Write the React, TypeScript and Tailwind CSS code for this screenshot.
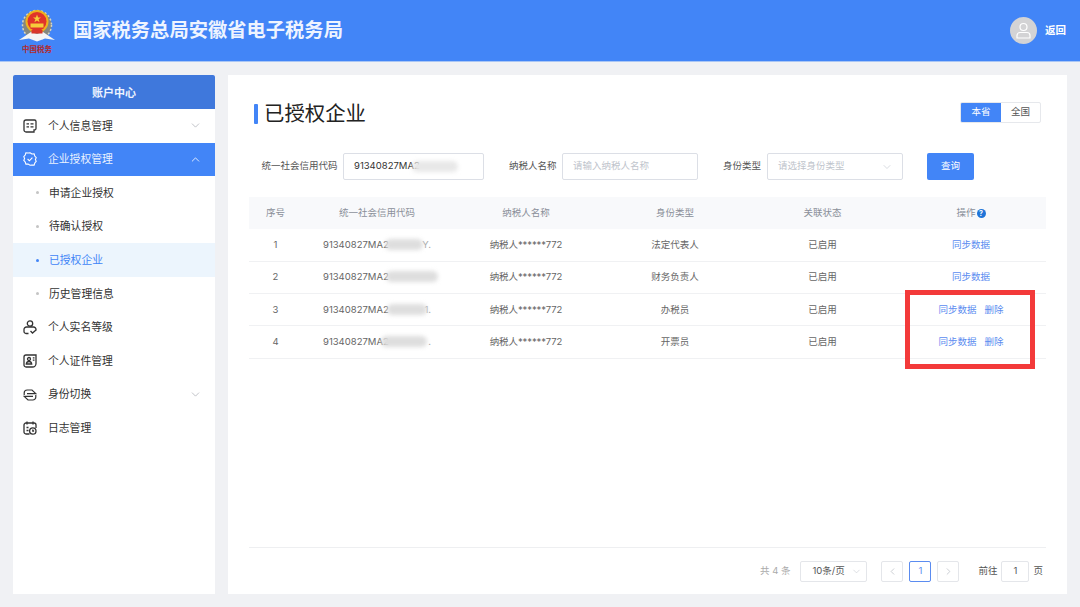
import { ChevronDown, ChevronLeft, ChevronRight, ChevronUp } from 'lucide-react';
import type { ReactNode } from 'react';

const cjk = "font-['Inter','Noto_Sans_CJK_SC',sans-serif]";

const IconInfo = () => (
  <svg width="14" height="14" viewBox="0 0 14 14" fill="none" stroke="#333" strokeWidth="1.3">
    <path d="M3 1h8.500A1.500 1.500 0 0 1 13 2.500v7a1.500 1.500 0 0 1-1.500 1.500H11v2H3a2 2 0 0 1-2-2V3a2 2 0 0 1 2-2z" />
    <path d="M3.500 4.800h2.500M7.500 4.800h3M3.500 7.800h2.500M7.500 7.800h3" />
  </svg>
);

const IconBadge = () => (
  <svg width="14" height="14" viewBox="0 0 14 14" fill="none" stroke="#fff" strokeWidth="1.1">
    <path d="M7 .8l1.900 1.200 2.200-.1.700 2.100 1.400 1.700-.8 1.800.8 1.900-1.400 1.600-.7 2.100-2.200-.1L7 13.200l-1.900-1.200-2.200.1-.7-2.100L.8 8.400l.8-1.900-.8-1.800 1.400-1.700.7-2.100 2.200.1z" />
    <path d="M4.600 7l1.800 1.800 3-3.200" />
  </svg>
);

const IconUser = () => (
  <svg width="14" height="15" viewBox="0 0 14 15" fill="none" stroke="#333" strokeWidth="1.3">
    <circle cx="7" cy="3.500" r="2.700" />
    <path d="M5.500 13.500H3a2 2 0 0 1-2-2V9.500a2.500 2.500 0 0 1 2.500-2.500h7A2.500 2.500 0 0 1 13 9.500v1" />
    <path d="M7.500 11l2 2 3.500-3" />
  </svg>
);

const IconCard = () => (
  <svg width="14" height="14" viewBox="0 0 14 14" fill="none" stroke="#333" strokeWidth="1.3">
    <path d="M3 1h10v8.500A3.500 3.500 0 0 1 9.500 13H3a2 2 0 0 1-2-2V3a2 2 0 0 1 2-2z" />
    <circle cx="6" cy="5" r="1.500" />
    <path d="M3.300 10c.2-1.600 1.300-2.500 2.700-2.500s2.500.9 2.700 2.500zM9.800 3.800h1.700M9.800 6.200h1.700" />
  </svg>
);

const IconSwitch = () => (
  <svg width="14" height="14" viewBox="0 0 14 14" fill="none" stroke="#333" strokeWidth="1.2">
    <path d="M1.200 7V5a3 3 0 0 1 3-3H9l3.800 3.600H4" />
    <path d="M12.800 7v2a3 3 0 0 1-3 3H5L1.200 8.400H10" />
  </svg>
);

const IconLog = () => (
  <svg width="14" height="14" viewBox="0 0 14 14" fill="none" stroke="#333" strokeWidth="1.3">
    <path d="M6.500 13H3a2 2 0 0 1-2-2V4a2 2 0 0 1 2-2h8a2 2 0 0 1 2 2v3" />
    <path d="M4 .500V3.500M10 .500V3.500M3.500 6.500h2M3.500 9.500h2" />
    <circle cx="9.800" cy="10" r="3.200" />
    <path d="M9.800 8.500V10h1.300" />
  </svg>
);

function Emblem() {
  return (
    <div className="flex w-[36px] flex-col items-center">
      <svg width="36" height="33" viewBox="0 0 36 33">
        <circle cx="18" cy="16" r="14.500" fill="#85877f" />
        <circle cx="18" cy="16" r="14.500" fill="none" stroke="#d8d6c0" strokeWidth="1.500" strokeDasharray="2 2" />
        <circle cx="18" cy="12.500" r="11.500" fill="#eeb21d" />
        <circle cx="18" cy="12.500" r="9.500" fill="#e0342a" />
        <path d="M18 5.500l1.100 3h2.900l-2.400 1.800 1 2.900-2.600-1.800-2.600 1.800 1-2.900-2.400-1.800h2.900z" fill="#f6cd3a" />
        <rect x="11.500" y="14.500" width="13" height="4" fill="#f6cd3a" />
        <path d="M0 31l12-8 6 2 6-2 12 8-10-1.500-8 3-8-3z" fill="#f4f4f4" />
        <path d="M12.500 21h11v3.500h-11z" fill="#d9362c" />
      </svg>
      <span className="mt-[2px] whitespace-nowrap font-['Noto_Sans_CJK_SC',serif] text-[7.500px] font-bold leading-[9px] text-[#b5292a]">
        中国税务
      </span>
    </div>
  );
}

function NavRow({ icon, label, arrow }: { icon: ReactNode; label: string; arrow?: boolean }) {
  return (
    <div className="flex h-[33.6px] items-center pl-[10px] pr-[13px] text-[#333]">
      <span className="flex w-[25px] shrink-0">{icon}</span>
      <span className="flex-1 pt-[2px] text-[10.800px]">{label}</span>
      {arrow && <ChevronDown size={13} strokeWidth={1.300} className="text-[#a8abb2]" />}
    </div>
  );
}

function SubRow({ label, active }: { label: string; active?: boolean }) {
  return (
    <div
      className={`flex h-[33.6px] items-center pl-[23px] text-[10.800px] ${
        active ? 'bg-[#ecf5fd] text-[#4285f7]' : 'text-[#333]'
      }`}
    >
      <span className={`mr-[10px] h-[3px] w-[3px] rounded-full ${active ? 'bg-[#4285f7]' : 'bg-[#c4c4c4]'}`} />
      <span className="pt-[2px]">{label}</span>
    </div>
  );
}

const rows = [
  { no: 1, role: '法定代表人', tail: 'Y.', smudge: 'left-[62px] w-[38px]', del: false },
  { no: 2, role: '财务负责人', tail: '', smudge: 'left-[63px] w-[52px]', del: false },
  { no: 3, role: '办税员', tail: '1.', smudge: 'left-[64px] w-[40px]', del: true },
  { no: 4, role: '开票员', tail: '.', smudge: 'left-[58px] w-[46px]', del: true },
];

export default function App() {
  return (
    <div className={`relative flex h-[607px] w-[1080px] flex-col overflow-hidden bg-[#f0f1f4] ${cjk}`}>
      <header className="flex h-[62px] shrink-0 items-center border-b border-[#a9c6f5] bg-[#4285f7] pl-[19px] pr-[14px]">
        <Emblem />
        <h1 className="ml-[18px] flex-1 text-[19.300px] font-bold text-[#eef4ff]">国家税务总局安徽省电子税务局</h1>
        <div className="flex h-[27px] w-[27px] items-center justify-center rounded-full bg-[#d3d3d5]">
          <svg width="17" height="17" viewBox="0 0 17 17" fill="none" stroke="#fff" strokeWidth="1.200">
            <circle cx="8.500" cy="5" r="3.500" />
            <path d="M2 16v-2.500a3 3 0 0 1 3-3h7a3 3 0 0 1 3 3V16z" />
          </svg>
        </div>
        <span className="ml-[8px] text-[10.500px] font-bold text-white">返回</span>
      </header>

      <div className="flex flex-1 gap-[13px] px-[13px] pb-[13px] pt-[13px]">
        <aside className="w-[202px] shrink-0 bg-white">
          <div className="flex h-[34px] items-center justify-center rounded-t-[2px] bg-[#3f78dc] pt-[2px] text-[11px] font-bold text-[#eef4ff]">
            账户中心
          </div>
          <NavRow icon={<IconInfo />} label="个人信息管理" arrow />
          <div className="flex h-[33.6px] items-center bg-[#4285f7] pl-[10px] pr-[13px] text-[#eaf2ff]">
            <span className="flex w-[25px] shrink-0">
              <IconBadge />
            </span>
            <span className="flex-1 pt-[2px] text-[10.800px]">企业授权管理</span>
            <ChevronUp size={13} strokeWidth={1.500} className="text-white" />
          </div>
          <SubRow label="申请企业授权" />
          <SubRow label="待确认授权" />
          <SubRow label="已授权企业" active />
          <SubRow label="历史管理信息" />
          <NavRow icon={<IconUser />} label="个人实名等级" />
          <NavRow icon={<IconCard />} label="个人证件管理" />
          <NavRow icon={<IconSwitch />} label="身份切换" arrow />
          <NavRow icon={<IconLog />} label="日志管理" />
        </aside>

        <main className="flex w-[839px] flex-col bg-white pl-[21px] pr-[21px]">
          <div className="mt-[26px] flex h-[26px] items-center">
            <span className="ml-[5px] h-[20px] w-[4px] rounded-[1px] bg-[#4285f7]" />
            <h2 className="ml-[6px] flex-1 text-[20.400px] leading-[26px] text-[#222]">已授权企业</h2>
            <div className="mr-[5px] flex h-[21px] w-[81px] -translate-y-[2px] overflow-hidden rounded-[2px] border border-[#e6e8ec] text-[9.500px]">
              <span className="flex w-[40px] items-center justify-center bg-[#4285f7] text-white">本省</span>
              <span className="flex flex-1 items-center justify-center text-[#555]">全国</span>
            </div>
          </div>

          <div className="mt-[26px] flex h-[27px] items-center text-[9.500px] text-[#555]">
            <span className="ml-[12.500px] w-[81.500px]">统一社会信用代码</span>
            <div className="relative flex h-[27px] w-[141px] items-center rounded-[2px] border border-[#dcdfe6] pl-[10px] text-[#333]">
              <span className="text-[9.500px]">91340827MA2</span>
              <span className="absolute left-[68px] top-[7px] h-[11px] w-[46px] rounded-full bg-[#e8e8e8] blur-[2px]" />
            </div>
            <span className="ml-[25px] w-[53px]">纳税人名称</span>
            <div className="flex h-[27px] w-[136px] items-center rounded-[2px] border border-[#dcdfe6] pl-[10px] text-[#c0c4cc]">
              请输入纳税人名称
            </div>
            <span className="ml-[25px] w-[44px]">身份类型</span>
            <div className="flex h-[27px] w-[136px] items-center justify-between rounded-[2px] border border-[#dcdfe6] pl-[10px] pr-[9px] text-[#c0c4cc]">
              请选择身份类型
              <ChevronDown size={12} strokeWidth={1.200} className="text-[#c0c4cc]" />
            </div>
            <button className="ml-[24px] flex h-[27px] w-[47px] items-center justify-center rounded-[2px] bg-[#4285f7] text-white">
              查询
            </button>
          </div>

          <table className="mt-[17px] w-[797px] table-fixed border-collapse text-[9.500px]">
            <colgroup>
              <col className="w-[53px]" />
              <col className="w-[150px]" />
              <col className="w-[148px]" />
              <col className="w-[150px]" />
              <col className="w-[145px]" />
              <col className="w-[151px]" />
            </colgroup>
            <thead>
              <tr className="h-[32px] bg-[#f8f9fb] text-[#8a8f99]">
                <th className="font-normal">序号</th>
                <th className="font-normal">统一社会信用代码</th>
                <th className="font-normal">纳税人名称</th>
                <th className="font-normal">身份类型</th>
                <th className="font-normal">关联状态</th>
                <th className="pl-[1px] font-normal">
                  <span className="inline-flex items-center gap-[1px]">
                    操作
                    <span className="flex h-[9px] w-[9px] items-center justify-center rounded-full bg-[#1f75d8] text-[7px] font-bold leading-none text-white">
                      ?
                    </span>
                  </span>
                </th>
              </tr>
            </thead>
            <tbody className="text-[#666]">
              {rows.map((row) => (
                <tr key={row.no} className="h-[32.300px] border-b border-[#f0f1f3] text-center">
                  <td>{row.no}</td>
                  <td>
                    <span className="relative flex w-[108px] translate-x-[21px] justify-between text-left">
                      <span>91340827MA2</span>
                      <span className="text-[#aaa]">{row.tail}</span>
                      <span className={`absolute top-[1px] h-[11px] rounded-full bg-[#dedede] blur-[2px] ${row.smudge}`} />
                    </span>
                  </td>
                  <td className="tracking-[-0.1px]">纳税人******772</td>
                  <td>{row.role}</td>
                  <td>已启用</td>
                  <td className="pl-[1px] text-[#5b8cf0]">
                    同步数据
                    {row.del && <span className="ml-[8px]">删除</span>}
                  </td>
                </tr>
              ))}
            </tbody>
          </table>

          <div className="mt-auto flex h-[47px] items-center justify-end border-t border-[#eeeff1] text-[9.500px] text-[#555]">
            <span className="text-[#aaa]">共 4 条</span>
            <div className="ml-[10px] flex h-[21px] w-[67px] items-center justify-between rounded-[2px] border border-[#e4e6ea] pl-[11px] pr-[4px]">
              10条/页
              <ChevronDown size={11} strokeWidth={1.200} className="text-[#c0c4cc]" />
            </div>
            <span className="ml-[14px] flex h-[21px] w-[22px] items-center justify-center rounded-[2px] border border-[#e4e6ea] text-[#b5b9c0]">
              <ChevronLeft size={11} strokeWidth={1.500} />
            </span>
            <span className="ml-[6px] flex h-[21px] w-[22px] items-center justify-center rounded-[2px] border border-[#5b8cf0] text-[#5b8cf0]">
              1
            </span>
            <span className="ml-[6px] flex h-[21px] w-[22px] items-center justify-center rounded-[2px] border border-[#e4e6ea] text-[#b5b9c0]">
              <ChevronRight size={11} strokeWidth={1.500} />
            </span>
            <span className="ml-[19px]">前往</span>
            <span className="ml-[4px] flex h-[21px] w-[28px] items-center justify-center rounded-[2px] border border-[#e4e6ea]">
              1
            </span>
            <span className="ml-[4px] mr-[3px]">页</span>
          </div>
        </main>
      </div>

      {/* red marker drawn over the screenshot */}
      <div className="absolute left-[905px] top-[290px] h-[79px] w-[130px] border-[5px] border-[#f33a3a]" />
    </div>
  );
}
